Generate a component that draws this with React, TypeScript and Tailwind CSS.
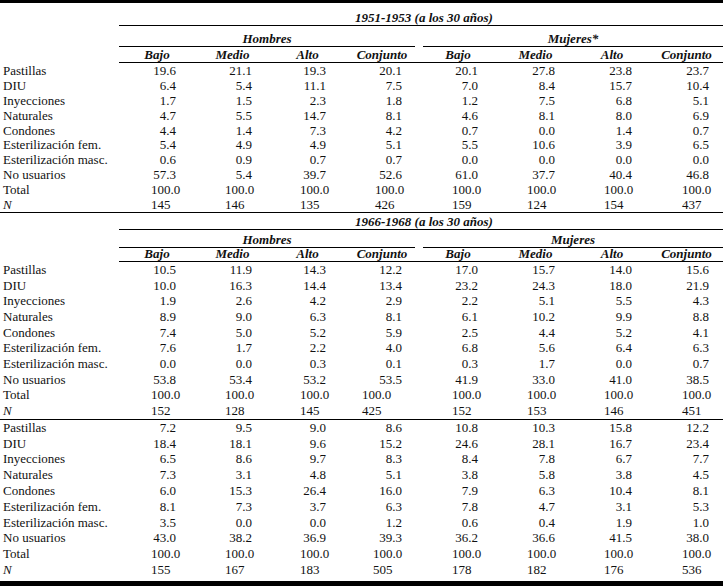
import React from "react";

const W = ["w-[76px]", "w-[75px]", "w-[75px]", "w-[74px]", "w-[78px]", "w-[77px]", "w-[76px]", "w-[73px]"];
const PR = ["pr-[19px]", "pr-[18px]", "pr-[19px]", "pr-[17px]", "pr-[19px]", "pr-[19px]", "pr-[18px]", "pr-[14px]"];
const PL1 = ["pl-[32px]", "pl-[30px]", "pl-[30px]", "pl-[30px]", "pl-[33px]", "pl-[30px]", "pl-[30px]", "pl-[32px]"];
const PL2 = ["pl-[32px]", "pl-[30px]", "pl-[30px]", "pl-[17px]", "pl-[33px]", "pl-[30px]", "pl-[30px]", "pl-[32px]"];
const PL3 = ["pl-[32px]", "pl-[30px]", "pl-[30px]", "pl-[28px]", "pl-[33px]", "pl-[30px]", "pl-[30px]", "pl-[32px]"];

const LABELS = [
  "Pastillas",
  "DIU",
  "Inyecciones",
  "Naturales",
  "Condones",
  "Esterilización fem.",
  "Esterilización masc.",
  "No usuarios",
];

const T = ["100.0", "100.0", "100.0", "100.0", "100.0", "100.0", "100.0", "100.0"];

const S1 = {
  data: [
    ["19.6", "21.1", "19.3", "20.1", "20.1", "27.8", "23.8", "23.7"],
    ["6.4", "5.4", "11.1", "7.5", "7.0", "8.4", "15.7", "10.4"],
    ["1.7", "1.5", "2.3", "1.8", "1.2", "7.5", "6.8", "5.1"],
    ["4.7", "5.5", "14.7", "8.1", "4.6", "8.1", "8.0", "6.9"],
    ["4.4", "1.4", "7.3", "4.2", "0.7", "0.0", "1.4", "0.7"],
    ["5.4", "4.9", "4.9", "5.1", "5.5", "10.6", "3.9", "6.5"],
    ["0.6", "0.9", "0.7", "0.7", "0.0", "0.0", "0.0", "0.0"],
    ["57.3", "5.4", "39.7", "52.6", "61.0", "37.7", "40.4", "46.8"],
  ],
  n: ["145", "146", "135", "426", "159", "124", "154", "437"],
};

const S2 = {
  data: [
    ["10.5", "11.9", "14.3", "12.2", "17.0", "15.7", "14.0", "15.6"],
    ["10.0", "16.3", "14.4", "13.4", "23.2", "24.3", "18.0", "21.9"],
    ["1.9", "2.6", "4.2", "2.9", "2.2", "5.1", "5.5", "4.3"],
    ["8.9", "9.0", "6.3", "8.1", "6.1", "10.2", "9.9", "8.8"],
    ["7.4", "5.0", "5.2", "5.9", "2.5", "4.4", "5.2", "4.1"],
    ["7.6", "1.7", "2.2", "4.0", "6.8", "5.6", "6.4", "6.3"],
    ["0.0", "0.0", "0.3", "0.1", "0.3", "1.7", "0.0", "0.7"],
    ["53.8", "53.4", "53.2", "53.5", "41.9", "33.0", "41.0", "38.5"],
  ],
  n: ["152", "128", "145", "425", "152", "153", "146", "451"],
};

const S3 = {
  data: [
    ["7.2", "9.5", "9.0", "8.6", "10.8", "10.3", "15.8", "12.2"],
    ["18.4", "18.1", "9.6", "15.2", "24.6", "28.1", "16.7", "23.4"],
    ["6.5", "8.6", "9.7", "8.3", "8.4", "7.8", "6.7", "7.7"],
    ["7.3", "3.1", "4.8", "5.1", "3.8", "5.8", "3.8", "4.5"],
    ["6.0", "15.3", "26.4", "16.0", "7.9", "6.3", "10.4", "8.1"],
    ["8.1", "7.3", "3.7", "6.3", "7.8", "4.7", "3.1", "5.3"],
    ["3.5", "0.0", "0.0", "1.2", "0.6", "0.4", "1.9", "1.0"],
    ["43.0", "38.2", "36.9", "39.3", "36.2", "36.6", "41.5", "38.0"],
  ],
  n: ["155", "167", "183", "505", "178", "182", "176", "536"],
};

const HEADS = ["Bajo", "Medio", "Alto", "Conjunto", "Bajo", "Medio", "Alto", "Conjunto"];

function Row({
  label,
  values,
  rowH,
  left,
  pl,
  italicLabel,
}: {
  label: string;
  values: string[];
  rowH: string;
  left?: boolean;
  pl: string[];
  italicLabel?: boolean;
}) {
  return (
    <div className={`flex ${rowH} leading-[15px] whitespace-nowrap`}>
      <div className={`w-[119px] pl-[3px] ${italicLabel ? "italic" : ""}`}>{label}</div>
      {values.map((v, i) => (
        <div key={i} className={`${W[i]} ${left ? `text-left ${pl[i]}` : `text-right ${PR[i]}`}`}>
          {v}
        </div>
      ))}
    </div>
  );
}

function Body({ s, rowH, pl }: { s: { data: string[][]; n: string[] }; rowH: string; pl: string[] }) {
  return (
    <div>
      {s.data.map((r, i) => (
        <Row key={i} label={LABELS[i]} values={r} rowH={rowH} pl={pl} />
      ))}
      <Row label="Total" values={T} rowH={rowH} left pl={pl} />
      <Row label="N" values={s.n} rowH={rowH} left pl={pl} italicLabel />
    </div>
  );
}

function Header({
  title,
  mujeres,
  titleH,
  groupH,
  headH,
}: {
  title: string;
  mujeres: string;
  titleH: string;
  groupH: string;
  headH: string;
}) {
  return (
    <div className="font-bold italic leading-[15px]">
      <div className={`flex ${titleH}`}>
        <div className="w-[119px]" />
        <div className="flex-1 flex items-end border-b border-black pl-[236px] whitespace-nowrap">{title}</div>
      </div>
      <div className={`flex ${groupH}`}>
        <div className="w-[119px]" />
        <div className="w-[296px] flex items-end justify-center border-b border-black">Hombres</div>
        <div className="w-[8px]" />
        <div className="flex-1 flex items-end justify-center border-b border-black">{mujeres}</div>
      </div>
      <div className={`flex ${headH}`}>
        <div className="w-[119px]" />
        <div className="flex-1 flex items-end border-b border-black">
          {HEADS.map((h, i) => (
            <div key={i} className={`${W[i]} text-center`}>
              {h}
            </div>
          ))}
        </div>
      </div>
    </div>
  );
}

export default function App() {
  return (
    <div
      className="w-[723px] h-[588px] bg-white text-[#111] text-[13px] overflow-hidden"
      style={{ fontFamily: '"Liberation Serif", "Times New Roman", serif' }}
    >
      <div className="h-[3px] bg-black" />
      <Header title="1951-1953 (a los 30 años)" mujeres="Mujeres*" titleH="h-[23px]" groupH="h-[21px]" headH="h-[16px]" />
      <Body s={S1} rowH="h-[14.9px]" pl={PL1} />
      <div className="h-px bg-black" />
      <Header title="1966-1968 (a los 30 años)" mujeres="Mujeres" titleH="h-[17px]" groupH="h-[18px]" headH="h-[14px]" />
      <Body s={S2} rowH="h-[15.7px]" pl={PL2} />
      <div className="h-px bg-black" />
      <Body s={S3} rowH="h-[15.8px]" pl={PL3} />
      <div className="mt-[3px] h-[5px] bg-black" />
    </div>
  );
}
